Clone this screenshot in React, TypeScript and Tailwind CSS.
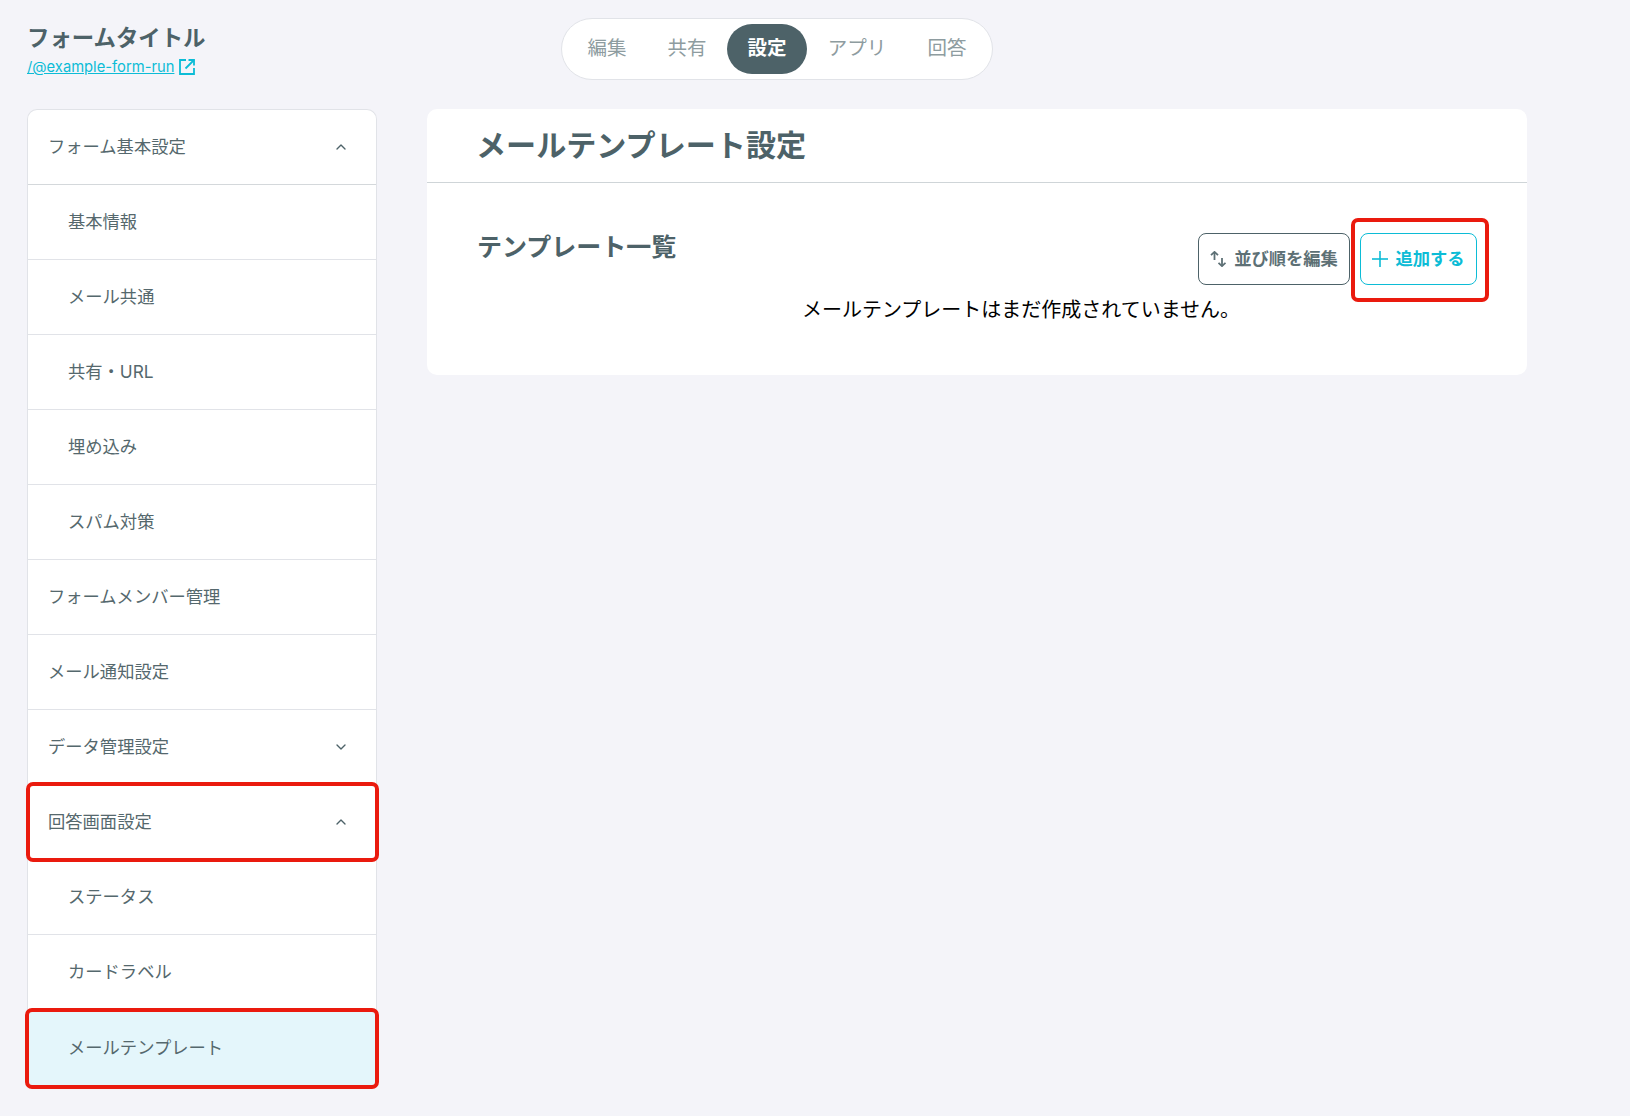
import React from "react";
import { ChevronDown, ChevronUp } from "lucide-react";

const FONT = 'Inter, "Noto Sans CJK JP", sans-serif';

type Row = { label: string; sub?: boolean; icon?: "up" | "down"; active?: boolean; mark?: string; last?: boolean };

const rows: Row[] = [
  { label: "フォーム基本設定", icon: "up" },
  { label: "基本情報", sub: true },
  { label: "メール共通", sub: true },
  { label: "共有・URL", sub: true },
  { label: "埋め込み", sub: true },
  { label: "スパム対策", sub: true },
  { label: "フォームメンバー管理" },
  { label: "メール通知設定" },
  { label: "データ管理設定", icon: "down" },
  { label: "回答画面設定", icon: "up", mark: "-left-[2px] -right-[3px] -top-[3px] -bottom-[3px]" },
  { label: "ステータス", sub: true },
  { label: "カードラベル", sub: true },
  { label: "メールテンプレート", sub: true, active: true, mark: "-left-[3px] -right-[3px] -top-[2px] -bottom-[4px]", last: true },
];

const tabs = [
  { label: "編集", w: "w-[80px]" },
  { label: "共有", w: "w-[80px]" },
  { label: "設定", w: "w-[80px]", active: true },
  { label: "アプリ", w: "w-[100px]" },
  { label: "回答", w: "w-[80px]" },
];

function Mark({ className }: { className: string }) {
  return <div className={`absolute border-[4px] border-[#ea1a0e] rounded-[7px] pointer-events-none ${className}`} />;
}

function OpenIcon() {
  return (
    <svg width="16" height="16" viewBox="0 0 16 16" fill="none" stroke="currentColor" strokeWidth="1.8">
      <path d="M7 1H1V15H15V9" />
      <path d="M9.5 1H15V6.5" />
      <path d="M15 1L6.5 9.5" />
    </svg>
  );
}

function SortIcon() {
  return (
    <svg width="16" height="16" viewBox="0 0 16 16" fill="none" stroke="currentColor" strokeWidth="1.8">
      <path d="M4.5 9V1" />
      <path d="M1 4.2L4.5 .9L8 4.2" />
      <path d="M12 7V15" />
      <path d="M8.5 11.8L12 15.1L15.5 11.8" />
    </svg>
  );
}

function PlusIcon() {
  return (
    <svg width="16" height="16" viewBox="0 0 16 16" fill="none" stroke="currentColor" strokeWidth="1.6">
      <path d="M8 0V16" />
      <path d="M0 8H16" />
    </svg>
  );
}

export default function App() {
  return (
    <div className="min-h-[1116px] bg-[#f4f4f9] pl-[27px] overflow-hidden" style={{ fontFamily: FONT }}>
      <header className="flex h-[109px] items-start">
        <div className="w-[534px] pt-[24px]">
          <div className="text-[22.4px] leading-[28px] font-bold text-[#4d6268]">フォームタイトル</div>
          <div className="flex items-center gap-[5px] mt-[5px] text-[14.75px] leading-[20px] text-[#0cbcd6]">
            <span className="underline">/@example-form-run</span>
            <OpenIcon />
          </div>
        </div>
        <nav className="mt-[18px] h-[62px] w-[432px] flex items-center pl-[5px] rounded-full bg-white border border-[#e1e3e8]">
          {tabs.map((t) => (
            <div
              key={t.label}
              className={`${t.w} h-[50px] flex items-center justify-center rounded-full text-[19.5px] ${
                t.active ? "bg-[#4d6268] text-white font-bold" : "text-[#8e9ca0]"
              }`}
            >
              {t.label}
            </div>
          ))}
        </nav>
      </header>

      <div className="flex items-start gap-[50px]">
        <aside className="w-[350px] rounded-t-[10px] bg-white border-x border-t border-[#e1e3e8] text-[17.3px] text-[#55686d]">
          {rows.map((r) => (
            <div
              key={r.label}
              className={`relative h-[75px] flex items-center justify-between pr-[27px] ${
                r.sub ? "pl-[40px]" : "pl-[20px]"
              } ${r.active ? "bg-[#e4f6fb]" : ""} ${r.last ? "" : `border-b ${r.icon === "up" && !r.mark ? "border-[#d4d8db]" : "border-[#e1e3e8]"}`}`}
            >
              <span>{r.label}</span>
              {r.icon === "up" && <ChevronUp size={16} strokeWidth={2} className="text-[#4d6268]" />}
              {r.icon === "down" && <ChevronDown size={16} strokeWidth={2} className="text-[#4d6268]" />}
              {r.mark && <Mark className={r.mark} />}
            </div>
          ))}
        </aside>

        <main className="w-[1100px] h-[266px] rounded-[10px] bg-white text-[#4d6268]">
          <div className="h-[74px] flex items-center pl-[49px] border-b border-[#cfd5d8]">
            <h1 className="text-[30.1px] font-bold">メールテンプレート設定</h1>
          </div>
          <div className="pl-[50px] pr-[50px]">
            <div className="flex justify-between items-start">
              <h2 className="text-[25px] leading-[32px] font-bold mt-[48px]">テンプレート一覧</h2>
              <div className="flex gap-[10px] mt-[50px]">
                <button className="w-[152px] h-[52px] flex items-center justify-center gap-[8px] rounded-[8px] border border-[#4d6268] bg-white text-[17.3px] font-bold text-[#5d7075]">
                  <SortIcon />
                  並び順を編集
                </button>
                <div className="relative">
                  <button className="w-[117px] h-[52px] flex items-center justify-center gap-[7px] rounded-[8px] border border-[#0cbcd6] bg-white text-[17.3px] font-bold text-[#0cbcd6]">
                    <PlusIcon />
                    追加する
                  </button>
                  <Mark className="-left-[9px] -right-[12px] -top-[15px] -bottom-[17px]" />
                </div>
              </div>
            </div>
            <p className="pl-[88px] mt-[11px] text-center text-[20px] leading-[28px] text-black">
              メールテンプレートはまだ作成されていません。
            </p>
          </div>
        </main>
      </div>
    </div>
  );
}
